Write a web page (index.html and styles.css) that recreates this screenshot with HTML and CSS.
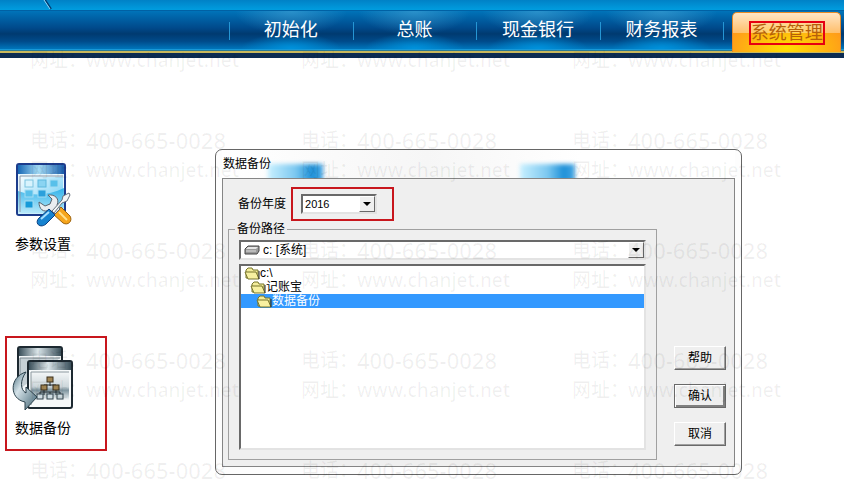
FILE: index.html
```html
<!DOCTYPE html>
<html lang="zh-CN">
<head>
    <meta charset="UTF-8">
    <meta name="viewport" content="width=device-width, initial-scale=1.0">
    <title>数据备份</title>
    <link rel="stylesheet" href="styles.css">
</head>
<body>
<header class="header">
    <div class="top-strip">
        <svg class="pen" width="14" height="10" viewBox="0 0 14 10" aria-hidden="true">
            <path d="M5 0l6 9" stroke="#003a70" stroke-width="2" fill="none"/>
            <path d="M4 0l6 9" stroke="#8fe0ff" stroke-width="1" fill="none"/>
        </svg>
    </div>
    <nav class="nav">
        <a class="nav-item" href="#">初始化</a>
        <a class="nav-item" href="#">总账</a>
        <a class="nav-item" href="#">现金银行</a>
        <a class="nav-item" href="#">财务报表</a>
        <a class="nav-item active" href="#"><span class="tab"><span class="tab-text">系统管理</span></span></a>
    </nav>
    <div class="header-line"></div>
</header>

<main class="main">
    <aside class="sidebar">
        <a class="tool" href="#">
            <svg class="tool-icon" width="66" height="68" viewBox="1 0 66 68" aria-hidden="true">
                <defs>
                    <linearGradient id="bar" x1="0" y1="0" x2="1" y2="0">
                        <stop offset="0" stop-color="#1767b5"/>
                        <stop offset=".45" stop-color="#a5dcf6"/>
                        <stop offset="1" stop-color="#1b5fae"/>
                    </linearGradient>
                    <linearGradient id="pane" x1="0" y1="0" x2="1" y2="1">
                        <stop offset="0" stop-color="#f4fcff"/>
                        <stop offset=".5" stop-color="#a8e2fa"/>
                        <stop offset="1" stop-color="#5cc8f2"/>
                    </linearGradient>
                    <linearGradient id="wave" x1="0" y1="0" x2="0" y2="1">
                        <stop offset="0" stop-color="#18a8e6"/>
                        <stop offset="1" stop-color="#c4eefc"/>
                    </linearGradient>
                </defs>
                <rect x="7" y="2" width="48" height="51" rx="2" fill="#e8f8ff" stroke="#1d3c8c" stroke-width="2"/>
                <rect x="8" y="3" width="46" height="9" fill="url(#bar)"/>
                <rect x="10" y="15" width="43" height="36" fill="url(#pane)"/>
                <path d="M8 29c16 6 32 4 46-3v26H8z" fill="url(#wave)" opacity=".8"/>
                <path d="M10 50V14h43" fill="none" stroke="#8b98a8"/>
                <g fill="#58c0ea" stroke="#a4dcf2">
                    <rect x="15" y="18" width="8" height="7" fill="#d8f3fd" stroke="#7cc4e0"/>
                    <rect x="28" y="18" width="8" height="7" fill="#8ad4f2" stroke="#5db8dd"/>
                    <rect x="40" y="18" width="8" height="7"/>
                    <rect x="15" y="28" width="8" height="7"/>
                    <rect x="28" y="28" width="8" height="7" fill="#2ba0dc"/>
                    <rect x="15" y="39" width="8" height="7" fill="#159ad9"/>
                </g>
                <path d="M45 50l6-5 9 9c3 5-2 10-7 7l-10-9z" fill="#f6a51c" stroke="#9c620e"/>
                <path d="M49 50l8 8" stroke="#ffe08a" stroke-width="2"/>
                <path d="M38 33c7-1 12 4 9 10l3 4-5 5-5-4c-7 3-11-1-11-8l6 4 5-2 2-5z" fill="#e9edf1" stroke="#59636e"/>
                <path d="M42 49l10-11 1-4 6-3 1 2-3 6-5 2-8 10z" fill="#f2f5f7" stroke="#65707b"/>
                <path d="M29 56l10-9 6 6-9 9c-6 5-12-1-7-6z" fill="#1683d0" stroke="#0b3f80"/>
                <path d="M31 57l8-7" stroke="#a8e0ff" stroke-width="2"/>
            </svg>
            <span class="tool-label">参数设置</span>
        </a>
        <a class="tool marked" href="#">
            <svg class="tool-icon" width="66" height="68" viewBox="1 1 66 68" aria-hidden="true">
                <defs>
                    <linearGradient id="steel" x1="0" y1="0" x2="1" y2="0">
                        <stop offset="0" stop-color="#3a4f5a"/>
                        <stop offset=".45" stop-color="#dbe6ea"/>
                        <stop offset="1" stop-color="#3b505b"/>
                    </linearGradient>
                    <linearGradient id="glass" x1="0" y1="0" x2="0" y2="1">
                        <stop offset="0" stop-color="#f4f7f8"/>
                        <stop offset=".45" stop-color="#ccd6da"/>
                        <stop offset=".55" stop-color="#7d939d"/>
                        <stop offset=".85" stop-color="#f5f8f9"/>
                    </linearGradient>
                    <linearGradient id="turn" x1="0" y1="0" x2="1" y2="1">
                        <stop offset="0" stop-color="#4a6e7e"/>
                        <stop offset=".35" stop-color="#d4e2e8"/>
                        <stop offset="1" stop-color="#3d6070"/>
                    </linearGradient>
                </defs>
                <rect x="8" y="2" width="44" height="46" rx="2" fill="#f1f5f7" stroke="#1d2931" stroke-width="2"/>
                <rect x="9" y="3" width="42" height="8" fill="url(#steel)"/>
                <path d="M10 44V13h40" fill="#c6d0d5" stroke="#7a878f"/>
                <rect x="18" y="16" width="44" height="47" rx="2" fill="#f6f9fa" stroke="#1d2931" stroke-width="2"/>
                <rect x="19" y="17" width="42" height="8" fill="url(#steel)"/>
                <rect x="21" y="27" width="38" height="33" fill="url(#glass)"/>
                <path d="M21 60V27h38" fill="none" stroke="#8c989f"/>
                <path d="M40 37v4M34 42v-2h12v2M34 45v5M46 45v5M30 50v-3h20v3M40 50v-3" fill="none" stroke="#202b31"/>
                <g fill="#a08452" stroke="#3c301c">
                    <rect x="37" y="32" width="6" height="5"/>
                    <rect x="31" y="40" width="6" height="5"/>
                    <rect x="43" y="40" width="6" height="5"/>
                </g>
                <g fill="#cfdce2" stroke="#33444d">
                    <rect x="27" y="49" width="6" height="5"/>
                    <rect x="37" y="49" width="6" height="5"/>
                    <rect x="47" y="49" width="6" height="5"/>
                </g>
                <path d="M16 27C-1 32-1 54 15 57v8l12-13-11-10v6c-6-3-6-13 0-21z" fill="url(#turn)" stroke="#2b414c"/>
            </svg>
            <span class="tool-label">数据备份</span>
        </a>
    </aside>

    <section class="dialog" role="dialog" aria-labelledby="dialog-title">
        <div class="title-bar"><h1 class="title" id="dialog-title">数据备份</h1></div>
        <form class="panel">
            <div class="fields">
                <div class="year-row">
                    <label for="year">备份年度</label>
                    <div class="year-mark">
                        <div class="select-wrap">
                            <select class="select" id="year">
                                <option>2016</option>
                            </select>
                            <span class="arrow"></span>
                        </div>
                    </div>
                </div>
                <fieldset class="path">
                    <legend>备份路径</legend>
                    <div class="select-wrap">
                        <select class="select drive" aria-label="驱动器">
                            <option>c: [系统]</option>
                        </select>
                        <svg class="drive-icon" width="16" height="10" viewBox="0 0 16 10" aria-hidden="true">
                            <path d="M1 4l3-3h11v5l-2 3H1z" fill="#999" stroke="#444"/>
                            <path d="M2 4l2-2h10l-2 2z" fill="#e4e4e4"/>
                            <path d="M2 6h10" stroke="#ddd"/>
                        </svg>
                        <span class="arrow"></span>
                    </div>
                    <ul class="folders" role="listbox" aria-label="备份路径">
                        <li class="folder" role="option">
                            <svg width="16" height="13" viewBox="0 0 16 13" aria-hidden="true"><path d="M2 11V3l2-2h4l1 2h5v8z" fill="#f3ec9a" stroke="#77742a"/><path d="M1 5h11l3 7H4z" fill="#f7f0a0" stroke="#77742a"/><path d="M15 4v8" stroke="#222"/></svg>
                            <span>c:\</span>
                        </li>
                        <li class="folder level-1" role="option">
                            <svg width="16" height="13" viewBox="0 0 16 13" aria-hidden="true"><path d="M2 11V3l2-2h4l1 2h5v8z" fill="#f3ec9a" stroke="#77742a"/><path d="M1 5h11l3 7H4z" fill="#f7f0a0" stroke="#77742a"/><path d="M15 4v8" stroke="#222"/></svg>
                            <span>记账宝</span>
                        </li>
                        <li class="folder level-2 selected" role="option" aria-selected="true">
                            <svg width="16" height="13" viewBox="0 0 16 13" aria-hidden="true"><path d="M2 11V3l2-2h4l1 2h5v8z" fill="#f3ec9a" stroke="#77742a"/><path d="M1 5h11l3 7H4z" fill="#f7f0a0" stroke="#77742a"/><path d="M15 4v8" stroke="#222"/></svg>
                            <span>数据备份</span>
                        </li>
                    </ul>
                </fieldset>
            </div>
            <div class="buttons">
                <button class="btn" type="button">帮助</button>
                <button class="btn default" type="submit">确认</button>
                <button class="btn" type="button">取消</button>
            </div>
        </form>
    </section>
</main>

<div class="watermark" aria-hidden="true">
    <div class="mark"><span>网址：</span><span class="web">www.chanjet.net</span><span>电话：</span><span class="phone">400-665-0028</span></div>
    <div class="mark"><span>网址：</span><span class="web">www.chanjet.net</span><span>电话：</span><span class="phone">400-665-0028</span></div>
    <div class="mark"><span>网址：</span><span class="web">www.chanjet.net</span><span>电话：</span><span class="phone">400-665-0028</span></div>
    <div class="mark"><span>网址：</span><span class="web">www.chanjet.net</span><span>电话：</span><span class="phone">400-665-0028</span></div>
    <div class="mark"><span>网址：</span><span class="web">www.chanjet.net</span><span>电话：</span><span class="phone">400-665-0028</span></div>
    <div class="mark"><span>网址：</span><span class="web">www.chanjet.net</span><span>电话：</span><span class="phone">400-665-0028</span></div>
    <div class="mark"><span>网址：</span><span class="web">www.chanjet.net</span><span>电话：</span><span class="phone">400-665-0028</span></div>
    <div class="mark"><span>网址：</span><span class="web">www.chanjet.net</span><span>电话：</span><span class="phone">400-665-0028</span></div>
    <div class="mark"><span>网址：</span><span class="web">www.chanjet.net</span><span>电话：</span><span class="phone">400-665-0028</span></div>
    <div class="mark"><span>网址：</span><span class="web">www.chanjet.net</span><span>电话：</span><span class="phone">400-665-0028</span></div>
    <div class="mark"><span>网址：</span><span class="web">www.chanjet.net</span><span>电话：</span><span class="phone">400-665-0028</span></div>
    <div class="mark"><span>网址：</span><span class="web">www.chanjet.net</span><span>电话：</span><span class="phone">400-665-0028</span></div>
</div>
</body>
</html>
```
FILE: styles.css
```css
* {
    box-sizing: border-box;
}

body {
    margin: 0;
    position: relative;
    min-height: 100vh;
    overflow-x: hidden;
    background: #fff;
    color: #000;
    font-family: "Liberation Sans", "Noto Sans CJK SC", sans-serif;
    font-size: 12px;
    line-height: 16px;
}

a {
    color: inherit;
    text-decoration: none;
}

/* header */
.header {
    overflow: hidden;
}

.top-strip {
    height: 10px;
    padding-left: 40px;
    background: linear-gradient(#0081c6, #009ddf);
}

.pen {
    display: block;
}

.nav {
    display: flex;
    height: 40px;
    padding-left: 229px;
    margin-right: -3px;
    border-top: 1px solid #0061a4;
    border-bottom: 1px solid #1798d8;
    background: linear-gradient(#0073b9, #00498a 45%, #003a70 60%, #004b8b 80%, #0075bb);
}

.nav-item {
    flex: 1;
    display: flex;
    align-items: center;
    justify-content: center;
    color: #fff;
    font-size: 18px;
    line-height: 24px;
    background:
        linear-gradient(#2596d4, #2596d4) 0 11px / 1px 18px no-repeat,
        radial-gradient(ellipse 50px 16px at 50% 100%, #0092dc, transparent),
        radial-gradient(ellipse 56px 24px at 50% 0, rgba(70, 165, 215, .6), transparent);
}

.nav-item.active {
    align-items: stretch;
    margin-bottom: -3px;
    color: #b5600a;
    background: linear-gradient(#2596d4, #2596d4) 0 11px / 1px 18px no-repeat;
}

.tab {
    position: relative;
    z-index: 1;
    flex: 1;
    display: flex;
    align-items: center;
    justify-content: center;
    margin: 1px 6px 0 9px;
    border: 1px solid #e98a25;
    border-bottom: 0;
    border-radius: 5px 5px 0 0;
    background:
        linear-gradient(rgba(255, 255, 255, .75), rgba(255, 255, 255, .35)) 0 0 / 100% 20px no-repeat,
        radial-gradient(ellipse 60px 30px at 50% 90%, #ffe000, #ff9b1a);
}

.tab-text {
    border: 2px solid #e60012;
    line-height: 20px;
}

.header-line {
    height: 8px;
    background: linear-gradient(#2a7a94 0 1px, #c9b85c 1px 3px, #0b2b52 3px 8px);
}

/* page body */
.main {
    display: flex;
    align-items: flex-start;
    padding: 91px 102px 8px 5px;
}

.sidebar {
    width: 102px;
    margin: 3px 108px 0 0;
    display: grid;
    gap: 69px;
}

.tool {
    height: 115px;
    padding: 8px 4px;
    border: 2px solid transparent;
    font-size: 14px;
    line-height: 20px;
}

.tool.marked {
    border-color: #c8161d;
}

.tool-icon {
    display: block;
    margin-bottom: 4px;
}

.tool-label {
    display: block;
    padding-left: 4px;
}

/* backup dialog */
.dialog {
    flex: 1;
    padding: 0 6px 7px;
    border: 1px solid #666;
    border-radius: 7px;
    background: #fdfdfd;
}

.title-bar {
    position: relative;
    height: 28px;
    padding: 6px 0 0 1px;
    overflow: hidden;
    background: linear-gradient(90deg, #fff, #f6f6f6 40%, #fff 70%);
}

/* desktop buttons showing through the glass frame */
.title-bar::before,
.title-bar::after {
    content: "";
    position: absolute;
    top: 14px;
    left: 46px;
    width: 55px;
    height: 18px;
    background: linear-gradient(90deg, #c8f0ff, #7cc8f0 50%, #1e90d8 80%, #4aa8e4);
    filter: blur(2px);
}

.title-bar::after {
    left: 298px;
}

.title {
    position: relative;
    z-index: 1;
    margin: 0;
    font-size: 12px;
    font-weight: normal;
    line-height: 16px;
}

.panel {
    display: flex;
    gap: 17px;
    padding: 8px 8px 6px 5px;
    border: 1px solid #858585;
    background: #efefef;
}

.fields {
    flex: 1;
}

.year-row {
    display: flex;
    align-items: center;
    gap: 5px;
    padding-left: 10px;
}

.year-mark {
    width: 103px;
    padding: 5px 15px 5px 8px;
    border: 2px solid #c8161d;
}

.select-wrap {
    position: relative;
    height: 20px;
}

.select {
    display: block;
    appearance: none;
    width: 100%;
    height: 20px;
    padding: 0 18px 0 2px;
    border: 2px solid;
    border-color: #696969 #e3e3e3 #e3e3e3 #696969;
    border-radius: 0;
    background: #fff;
    color: #000;
    font: inherit;
    font-size: 11px;
}

.select.drive {
    padding-left: 22px;
    font-size: 12px;
}

.drive-icon {
    position: absolute;
    left: 5px;
    top: 5px;
}

.arrow {
    position: absolute;
    top: 2px;
    right: 2px;
    width: 16px;
    height: 16px;
    border: 1px solid;
    border-color: #fff #696969 #696969 #fff;
    background: #efefef;
    pointer-events: none;
}

.arrow::after {
    content: "";
    position: absolute;
    left: 3px;
    top: 5px;
    border: 4px solid transparent;
    border-top-color: #000;
    border-bottom: 0;
}

.path {
    min-width: 0;
    margin: 0;
    padding: 3px 10px 9px;
    border: 1px solid #a0a0a0;
}

.path legend {
    margin-left: -4px;
    padding: 0 2px;
    line-height: 16px;
}

.folders {
    height: 186px;
    margin: 4px 0 0;
    padding: 0;
    border: 2px solid;
    border-color: #696969 #e3e3e3 #e3e3e3 #696969;
    background: #fff;
    list-style: none;
}

.folder {
    display: flex;
    align-items: center;
    height: 14px;
    padding-left: 3px;
    line-height: 14px;
}

.folder.level-1 {
    padding-left: 9px;
}

.folder.level-2 {
    padding-left: 15px;
}

.folder.selected {
    background: #3399ff;
    color: #fff;
}

.buttons {
    display: flex;
    flex-direction: column;
    justify-content: flex-end;
    gap: 14px;
    padding-bottom: 14px;
}

.btn {
    width: 52px;
    height: 24px;
    padding: 0;
    border: 1px solid;
    border-color: #fff #696969 #696969 #fff;
    box-shadow: inset -1px -1px #a0a0a0;
    background: #efefef;
    color: #000;
    font: inherit;
}

.btn.default {
    border-color: #696969;
    box-shadow: inset 1px 1px #fff, inset -2px -2px #808080;
}

/* repeated contact text over the whole page */
.watermark {
    position: absolute;
    inset: 0;
    display: grid;
    grid-template-columns: repeat(3, 271px);
    grid-auto-rows: 110px;
    padding: 45px 0 0 30px;
    overflow: hidden;
    pointer-events: none;
    color: rgba(0, 0, 0, .06);
    font-family: "Noto Sans", "Noto Sans CJK SC", sans-serif;
    font-size: 19px;
    font-weight: 500;
}

.mark {
    display: grid;
    grid-template-columns: 56px 1fr;
    grid-template-rows: 30px 50px;
    align-content: start;
    line-height: 30px;
    white-space: nowrap;
}

.mark span:nth-child(n+3) {
    padding-top: 50px;
}

.phone {
    font-size: 22px;
}
```
